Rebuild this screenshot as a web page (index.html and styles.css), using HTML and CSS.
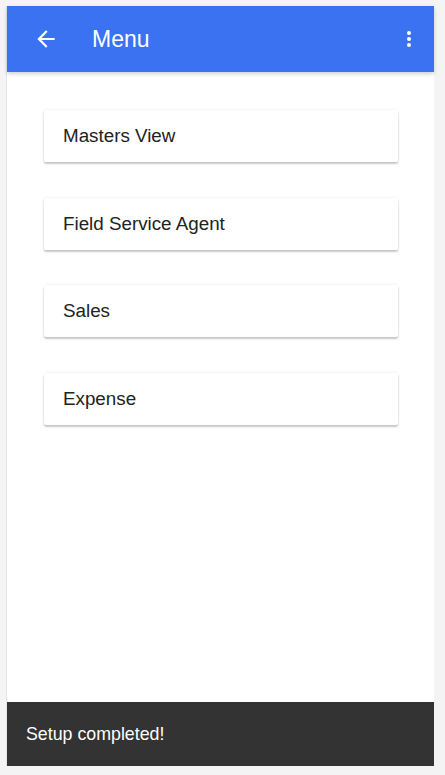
FILE: index.html
```html
<!DOCTYPE html>
<html lang="en">
<head>
    <meta charset="UTF-8">
    <meta name="viewport" content="width=device-width, initial-scale=1.0">
    <title>Menu</title>
    <link rel="stylesheet" href="styles.css">
</head>
<body>
    <div class="app">
        <header class="toolbar">
            <button class="icon-btn back">
                <svg viewBox="0 0 24 24" width="24" height="24">
                    <path d="M20 11H7.83l5.59-5.59L12 4l-8 8 8 8 1.41-1.41L7.83 13H20v-2z" fill="#fff"></path>
                </svg>
            </button>
            <h1 class="title">Menu</h1>
            <button class="icon-btn more">
                <svg viewBox="0 0 24 24" width="24" height="24">
                    <circle cx="12" cy="5.5" r="2.2" fill="#fff"></circle>
                    <circle cx="12" cy="12" r="2.2" fill="#fff"></circle>
                    <circle cx="12" cy="18.5" r="2.2" fill="#fff"></circle>
                </svg>
            </button>
        </header>

        <main class="content">
            <div class="card">Masters View</div>
            <div class="card">Field Service Agent</div>
            <div class="card">Sales</div>
            <div class="card">Expense</div>
        </main>

        <div class="snackbar">Setup completed!</div>
    </div>
</body>
</html>
```

FILE: styles.css
```css
body {
    margin: 0;
    background: #f4f4f4;
    font-family: 'Liberation Sans', Arial, sans-serif;
}

.app {
    margin: 6px 0 0 6px;
    width: 428px;
    height: 760px;
    background: #fff;
    border-left: 1px solid #e4e4e4;
    box-sizing: border-box;
    display: flex;
    flex-direction: column;
}

.toolbar {
    height: 66px;
    flex-shrink: 0;
    background: #3a72f2;
    color: #fff;
    display: flex;
    align-items: center;
    padding: 0 14px 0 26px;
    box-shadow: 0 2px 4px rgba(0, 0, 0, 0.18);
    position: relative;
    z-index: 1;
}

.icon-btn {
    background: none;
    border: none;
    padding: 0;
    display: flex;
    align-items: center;
    justify-content: center;
    cursor: pointer;
}

.back svg {
    width: 26px;
    height: 26px;
}

.title {
    margin: 0 0 0 33px;
    font-size: 23px;
    font-weight: normal;
    flex: 1;
}

.more svg {
    width: 22px;
    height: 22px;
}

.content {
    flex: 1;
    padding: 38px 36px 0 37px;
    display: flex;
    flex-direction: column;
    gap: 35.7px;
}

.card {
    height: 52px;
    display: flex;
    align-items: center;
    padding: 0 19px;
    font-size: 18.8px;
    color: #222;
    background: #fff;
    box-shadow: 0 2px 2px rgba(0, 0, 0, 0.2), 0 0 3px rgba(0, 0, 0, 0.1);
    border-radius: 2px;
}

.snackbar {
    height: 64px;
    flex-shrink: 0;
    background: #333;
    color: #fff;
    display: flex;
    align-items: center;
    padding: 0 19px;
    font-size: 17.8px;
}
```
